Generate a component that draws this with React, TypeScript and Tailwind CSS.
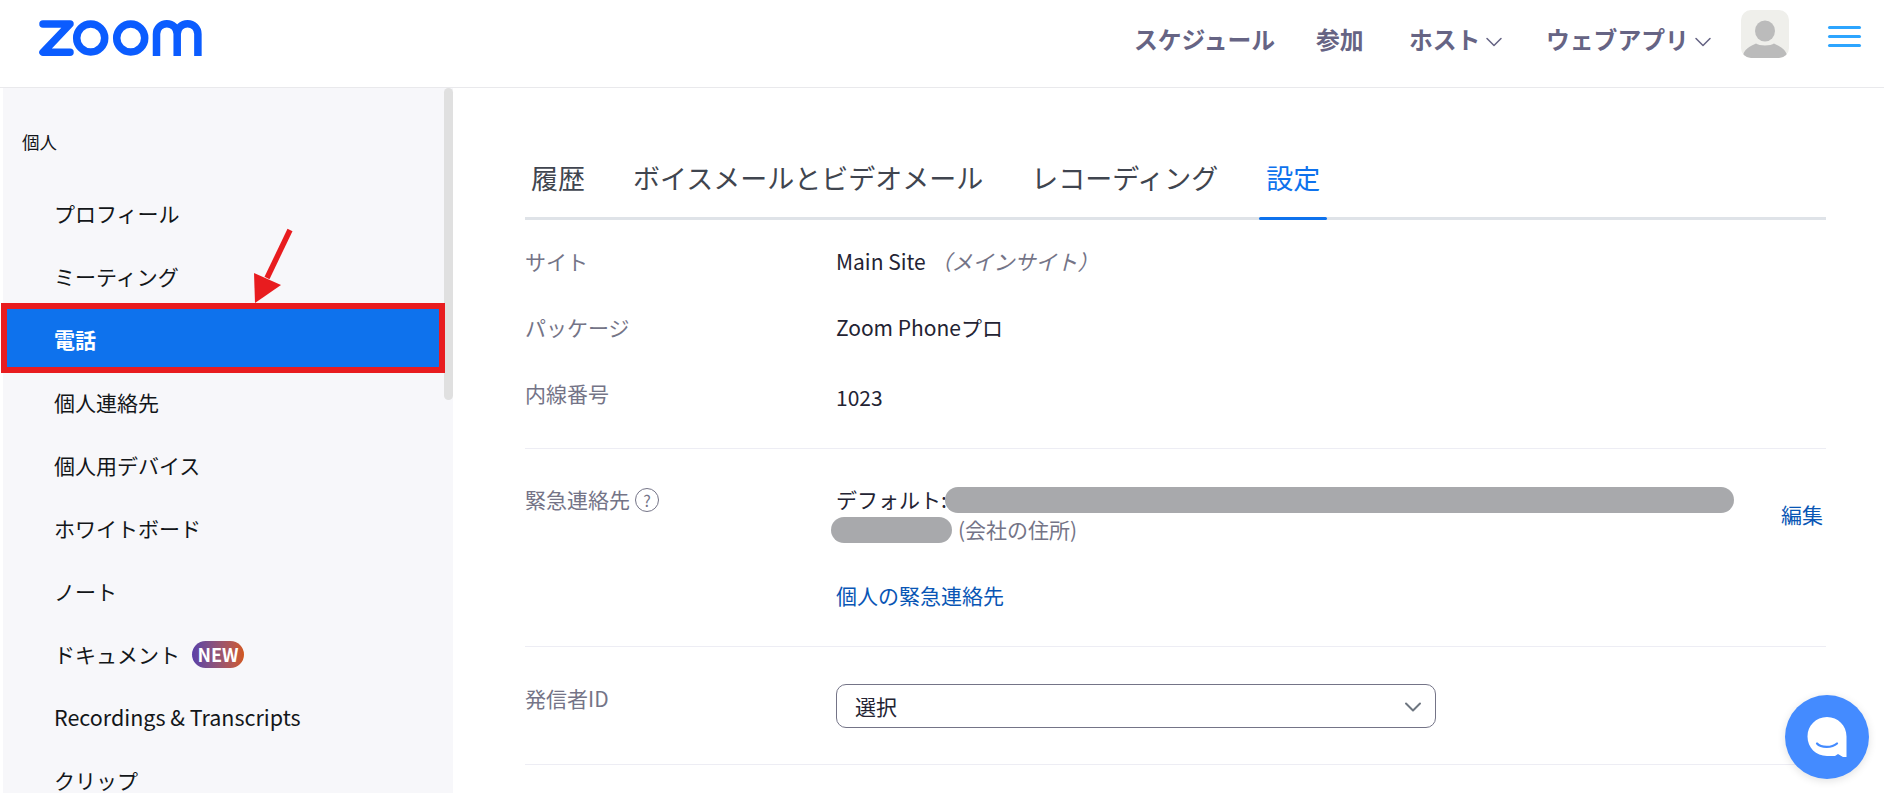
import { ChevronDown } from 'lucide-react'

const MENU = ['プロフィール', 'ミーティング', '電話', '個人連絡先', '個人用デバイス', 'ホワイトボード', 'ノート', 'ドキュメント', 'Recordings & Transcripts', 'クリップ']

function ZoomLogo() {
  return (
    <svg width="170" height="44" viewBox="36 16 170 44" fill="none" stroke="#0b5cff" strokeWidth="7.5" className="shrink-0">
      <path d="M43 24H70L43 52.3H70" strokeLinejoin="round" strokeLinecap="round" />
      <circle cx="90.7" cy="38" r="14" />
      <circle cx="130.7" cy="38" r="14" />
      <path d="M156.5 56V34a10.35 10.35 0 0 1 20.7 0V56M177.2 34a10.35 10.35 0 0 1 20.7 0V56" />
    </svg>
  )
}

function Avatar() {
  return (
    <div className="h-12 w-12 overflow-hidden rounded-[10px] bg-[#efefeb]">
      <svg width="48" height="48" viewBox="0 0 48 48" fill="#bbbbbb">
        <ellipse cx="24" cy="21" rx="10" ry="10.5" />
        <path d="M1.5 48C2 39 10 36 15 33.500C18 36 30 36 33 33.500C38 36 46 39 46.500 48Z" />
      </svg>
    </div>
  )
}

function Header() {
  return (
    <header className="flex h-[88px] shrink-0 items-start border-b border-[#e9e9ec] bg-white">
      <div className="ml-[36px] mt-[16px]"><ZoomLogo /></div>
      <nav className="ml-auto flex h-[87px] items-center pb-[10px] text-[23.800px] font-bold text-[#666484]">
        <span className="w-[182px]">スケジュール</span>
        <span className="w-[93px]">参加</span>
        <span className="flex w-[137px] items-center">ホスト<ChevronDown className="mt-[6px] h-[28px] w-[28px]" strokeWidth={1.3} /></span>
        <span className="flex w-[195px] items-center">ウェブアプリ<ChevronDown className="mt-[6px] h-[28px] w-[28px]" strokeWidth={1.3} /></span>
        <div className="mb-[10px]"><Avatar /></div>
        <div className="ml-[39px] mr-[23px] mb-[4px] flex w-[33px] flex-col gap-[6px]">
          <div className="h-[3px] rounded-full bg-[#2da5ff]" />
          <div className="h-[3px] rounded-full bg-[#2da5ff]" />
          <div className="h-[3px] rounded-full bg-[#2da5ff]" />
        </div>
      </nav>
    </header>
  )
}

function Sidebar() {
  return (
    <aside className="relative ml-[3px] w-[450px] shrink-0 bg-[#f7f7fa] text-[21px] leading-[24px] text-[#131619]">
      <div className="absolute right-0 top-0 z-10 h-[312px] w-[9px] rounded-full bg-[#e0e0e0]" />
      <div className="ml-[19px] mt-[42px] flex h-6 items-center text-[17.5px]">個人</div>
      <div className="mt-[27.500px]">
        {MENU.map(m => (
          <div key={m} className={m === '電話' ? 'relative flex h-[63px] items-center bg-[#0e72ed] pl-[51px] font-bold text-white' : 'flex h-[63px] items-center pl-[51px]'}>
            {m === 'Recordings & Transcripts' ? <span className="text-[21.500px]">{m}</span> : m}
            {m === 'ドキュメント' && (
              <span className="ml-[12px] flex h-[27px] w-[52px] items-center justify-center rounded-full bg-gradient-to-r from-[#5a3ea8] to-[#d1561a] text-[18px] font-bold text-white">NEW</span>
            )}
            {m === '電話' && <div className="absolute left-[-2px] top-[-4.500px] z-20 h-[70px] w-[444px] border-[6px] border-[#e81c1f]" />}
          </div>
        ))}
      </div>
      <svg width="60" height="85" viewBox="0 0 60 85" className="absolute left-[243px] top-[138px] z-30">
        <path d="M44 4L21 52" stroke="#e81c1f" strokeWidth="5.500" fill="none" />
        <path d="M9 77L8 47L35 59Z" fill="#e81c1f" />
      </svg>
    </aside>
  )
}

function Main() {
  return (
    <main className="ml-[72px] w-[1301px] shrink-0 text-[21px] text-[#232333]">
      <div className="mt-[50px] flex h-[81.500px] gap-[34px] border-b-[3px] border-[#dfe3e8] text-[27px] text-[#40454f]">
        <div className="pl-[6px] pr-[7px] pt-[20px]">履歴</div>
        <div className="px-[7px] pt-[20px]">ボイスメールとビデオメール</div>
        <div className="px-[7px] pt-[20px]">レコーディング</div>
        <div className="relative px-[7px] pt-[20px] text-[#0e72ed]">
          設定
          <div className="absolute bottom-[-3px] left-0 h-[3px] w-full rounded-full bg-[#0e72ed]" />
        </div>
      </div>

      <div className="border-b border-[#ededf4] pb-[21px] pt-[9px]">
        <Row label="サイト">Main Site <span className="italic text-[#747487]">（メインサイト）</span></Row>
        <Row label="パッケージ">Zoom Phoneプロ</Row>
        <Row label="内線番号"><span className="relative top-[4px]">1023</span></Row>
      </div>

      <div className="grid grid-cols-[311px_1fr_auto] border-b border-[#ededf4] pb-[37.500px] pt-[38px]">
        <div className="flex h-[26px] items-center text-[#747487]">
          緊急連絡先
          <span className="ml-[5px] flex h-[24px] w-[24px] items-center justify-center rounded-full border border-[#747487] text-[16px]">?</span>
        </div>
        <div>
          <div className="flex h-[26px] items-center">
            <span className="w-[109px] shrink-0 whitespace-nowrap">デフォルト:</span>
            <span className="h-[26px] w-[789px] rounded-full bg-[#a8a9ac]" />
          </div>
          <div className="mt-[4px] flex h-[26px] items-center text-[#747487]">
            <span className="-ml-[5px] mr-[6px] h-[26px] w-[121px] rounded-full bg-[#a8a9ac]" />
            (会社の住所)
          </div>
          <div className="mt-[40px] flex h-[26px] items-center text-[#0956b5]">個人の緊急連絡先</div>
        </div>
        <div className="mr-[3px] mt-[12.500px] h-[26px] text-[#0956b5]">編集</div>
      </div>

      <div className="grid grid-cols-[311px_1fr] border-b border-[#ededf4] pb-[36px] pt-[37px]">
        <div className="flex h-[32px] items-center pb-[3px] text-[#747487]">発信者ID</div>
        <div className="flex h-[44px] w-[600px] items-center justify-between rounded-[10px] border border-[#747487] pl-[18px] pr-[8px] pt-[1px]">
          選択
          <ChevronDown className="h-[28px] w-[28px] text-[#6e7680]" strokeWidth={1.7} />
        </div>
      </div>
    </main>
  )
}

function Row({ label, children }: { label: string; children: React.ReactNode }) {
  return (
    <div className="grid h-[66px] grid-cols-[311px_1fr] items-center">
      <div className="text-[#747487]">{label}</div>
      <div>{children}</div>
    </div>
  )
}

function ChatBubble() {
  return (
    <div className="absolute left-[1785px] top-[695px] z-40 flex h-[84px] w-[84px] items-center justify-center rounded-full bg-[#448bff] shadow-[0_2px_8px_rgba(0,0,0,0.12)]">
      <svg width="40" height="40" viewBox="0 0 40 40">
        <path d="M20 0C9 0 .5 8.500 .5 19.500S9 39 20 39H28L31 37L36 40H39.500V19.500C39.500 8.500 31 0 20 0Z" fill="#fff" />
        <path d="M10 26.500C14 31 25 31 30 26.500" fill="none" stroke="#448bff" strokeWidth="2.200" strokeLinecap="round" />
      </svg>
    </div>
  )
}

export default function App() {
  return (
    <div className="relative flex h-screen flex-col overflow-hidden bg-white font-['Noto_Sans_CJK_JP',sans-serif]">
      <Header />
      <div className="flex min-h-0 flex-1">
        <Sidebar />
        <Main />
      </div>
      <ChatBubble />
    </div>
  )
}
